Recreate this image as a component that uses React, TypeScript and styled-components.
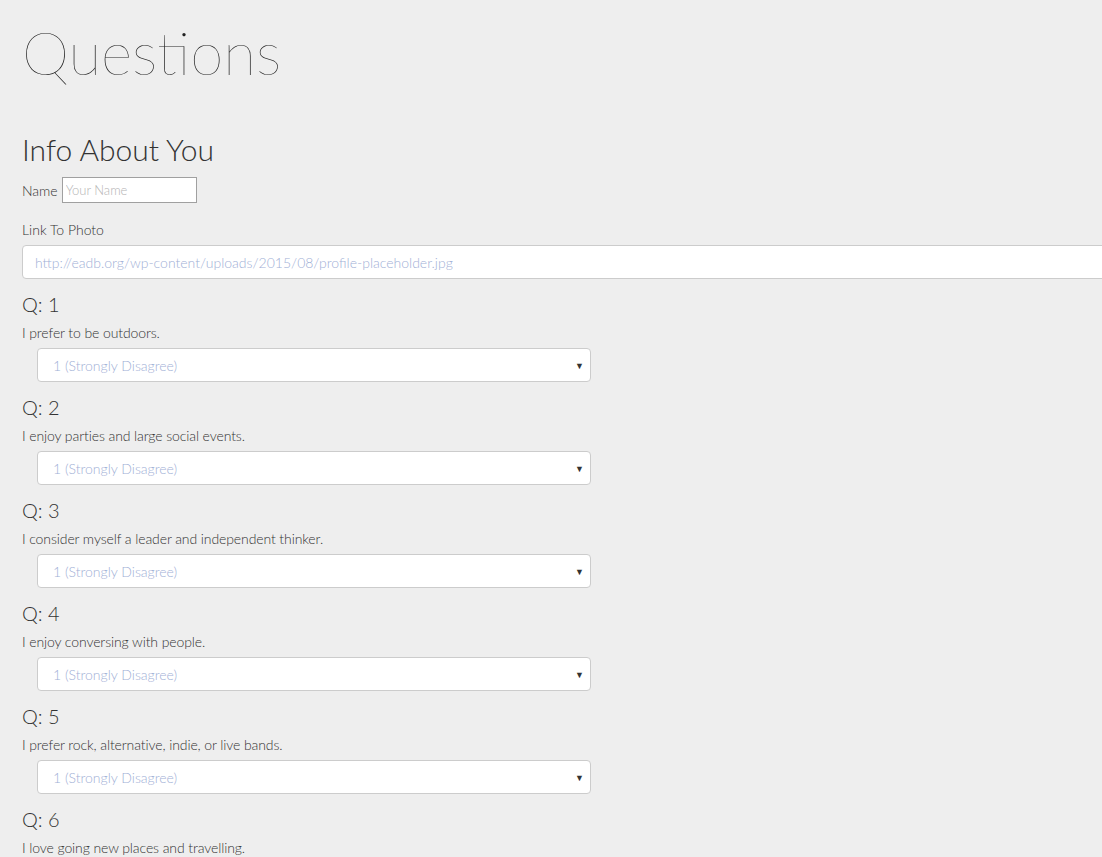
import React from "react";
import styled, { createGlobalStyle } from "styled-components";

const GlobalStyle = createGlobalStyle`
  html, body {
    margin: 0;
    padding: 0;
    background: #eeeeee;
    overflow-x: hidden;
    scrollbar-width: none;
  }
  body::-webkit-scrollbar { display: none; }
  body {
    font-family: "Lato", "Open Sans", sans-serif;
    font-weight: 300;
    color: #333;
  }
`;

const Page = styled.div`
  padding: 12px 0 40px 22px;
`;

const Title = styled.h1`
  margin: 0;
  font-size: 60px;
  font-weight: 200;
  line-height: 80px;
  color: #222;
`;

const SectionTitle = styled.h2`
  margin: 36px 0 0;
  font-size: 30px;
  font-weight: 300;
  line-height: 42px;
  color: #333;
`;

const NameRow = styled.div`
  display: flex;
  align-items: center;
  gap: 4px;
  margin-top: 7px;
  font-size: 14px;
`;

const NameInput = styled.input`
  box-sizing: border-box;
  width: 135px;
  height: 26px;
  padding: 0 3px;
  border: 1px solid #a0a0a0;
  background: #fff;
  font-family: inherit;
  font-weight: 300;
  font-size: 13px;
  color: #333;
  &::placeholder { color: #b4b4b4; }
`;

const Label = styled.div`
  margin-top: 17px;
  font-size: 14px;
  line-height: 20px;
`;

const PhotoInput = styled.input`
  display: block;
  box-sizing: border-box;
  width: calc(100% + 40px);
  height: 34px;
  margin-top: 5px;
  padding: 0 12px;
  border: 1px solid #cccccc;
  border-radius: 4px;
  background: #fff;
  font-family: inherit;
  font-weight: 300;
  font-size: 14px;
  color: #9fb0d6;
  &::placeholder { color: #9fb0d6; }
`;

const QuestionBlock = styled.section`
  margin-top: 13px;
`;

const QuestionHead = styled.h3`
  margin: 0;
  font-size: 20px;
  font-weight: 300;
  line-height: 24px;
`;

const QuestionText = styled.p`
  margin: 7px 0 0;
  font-size: 14px;
  line-height: 20px;
  letter-spacing: -0.1px;
`;

const SelectWrap = styled.div`
  position: relative;
  width: 554px;
  margin: 5px 0 0 15px;
`;

const Select = styled.select`
  display: block;
  box-sizing: border-box;
  width: 100%;
  height: 34px;
  padding: 0 30px 0 15px;
  border: 1px solid #cccccc;
  border-radius: 4px;
  background: #fff;
  appearance: none;
  font-family: "Lato", "Open Sans", sans-serif;
  font-weight: 300;
  font-size: 14px;
  color: #9fb0d6;
`;

const Arrow = styled.span`
  position: absolute;
  right: 7px;
  top: 50%;
  transform: translateY(-50%);
  font-size: 9px;
  color: #333;
  pointer-events: none;
`;

const questions: string[] = [
  "I prefer to be outdoors.",
  "I enjoy parties and large social events.",
  "I consider myself a leader and independent thinker.",
  "I enjoy conversing with people.",
  "I prefer rock, alternative, indie, or live bands.",
  "I love going new places and travelling.",
];

const options: string[] = [
  "1 (Strongly Disagree)",
  "2",
  "3",
  "4",
  "5 (Strongly Agree)",
];

const App = () => {
  return (
    <>
      <GlobalStyle />
      <Page>
        <Title>Questions</Title>
        <SectionTitle>Info About You</SectionTitle>
        <NameRow>
          Name
          <NameInput placeholder="Your Name" />
        </NameRow>
        <Label>Link To Photo</Label>
        <PhotoInput placeholder="http://eadb.org/wp-content/uploads/2015/08/profile-placeholder.jpg" />
        {questions.map((q, i) => (
          <QuestionBlock key={i}>
            <QuestionHead>Q: {i + 1}</QuestionHead>
            <QuestionText>{q}</QuestionText>
            <SelectWrap>
              <Select defaultValue={options[0]}>
                {options.map((o) => (
                  <option key={o}>{o}</option>
                ))}
              </Select>
              <Arrow>▼</Arrow>
            </SelectWrap>
          </QuestionBlock>
        ))}
      </Page>
    </>
  );
};

export default App;
